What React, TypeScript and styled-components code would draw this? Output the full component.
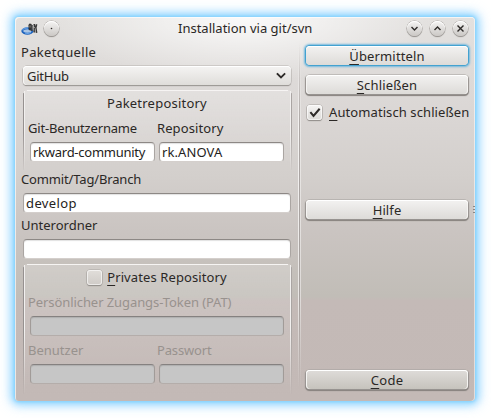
import React from 'react';
import styled, { createGlobalStyle, css } from 'styled-components';

const GlobalStyle = createGlobalStyle`
  * { box-sizing: border-box; }
  body { margin: 0; background: #fff; font: 13px/18px "Noto Sans", "Open Sans", sans-serif; color: #2b2826; }
`;

const Desktop = styled.div`
  width: 491px;
  height: 418px;
  padding: 17px 16px 17px 15px;
  overflow: hidden;
`;

const Dialog = styled.main`
  width: 460px;
  height: 384px;
  display: flex;
  flex-direction: column;
  border-radius: 4px;
  background:
    radial-gradient(ellipse 190px 64px at 50% 0, rgba(255,255,255,.85), rgba(255,255,255,0)),
    linear-gradient(#e3e1df 0, #dad6d4 100px, #d3cfcc 160px, #cac4c1 215px, #c1bdb7 279px, #c4bab7 284px, #c3b9b6 384px);
  box-shadow:
    inset 1px 1px 0 rgba(255,255,255,.65), inset -1px 0 0 rgba(255,255,255,.5),
    0 0 3px 1px #84d3fd, 0 0 9px 4px rgba(125,205,255,.8), 0 0 15px 4px rgba(160,215,255,.3);
`;

const TitleBar = styled.header`
  height: 26px;
  flex: none;
  display: flex;
  align-items: center;
  padding: 0 7px 4px 6px;
`;

const Title = styled.h1`
  flex: 1;
  margin: 0;
  padding-left: 119px;
  font: inherit;
`;

const TitleButton = styled.span<{ $gap?: number }>`
  width: 15px;
  height: 15px;
  margin-left: ${p => p.$gap ?? 8}px;
  border-radius: 50%;
  background: linear-gradient(#f5f4f3, #cbc8c5);
  box-shadow: 0 0 0 .6px #a9a5a2, 0 1px 1px 0 #85817e, inset 0 1px 0 #fff;
  svg { display: block; }
`;

const Body = styled.div`
  flex: 1;
  display: flex;
`;

const Form = styled.section`
  width: 276px;
  padding-left: 8px;
  display: flex;
  flex-direction: column;
`;

const Label = styled.label<{ $space?: number; $top?: number; $faint?: boolean }>`
  display: block;
  height: 18px;
  white-space: nowrap;
  letter-spacing: ${p => p.$space ?? 0}px;
  margin: ${p => p.$top ?? 0}px 0 0 -2px;
  ${p => p.$faint && css`color: #98928e;`}
`;

const Combo = styled.div`
  width: 268px;
  height: 19px;
  margin: 5px 0;
  padding: 0 5px 0 4px;
  display: flex;
  align-items: center;
  justify-content: space-between;
  letter-spacing: -.24px;
  border-radius: 4px;
  background: linear-gradient(#f5f4f3, #dfddda);
  box-shadow: 0 0 0 .5px #b5b1ae, 0 1px 1px #7e7a77, inset 0 1px 0 #fff, inset 1px 0 0 #f8f7f6;
`;

const Group = styled.fieldset<{ $height: number }>`
  width: 269px;
  height: ${p => p.$height}px;
  margin: 0;
  padding: 4px 7px 0 6px;
  border: 1px solid transparent;
  border-width: 0 1px;
  min-width: 0;
  border-radius: 4px 4px 0 0;
  background:
    linear-gradient(#f6f4f3, #f6f4f3) 3px 0 / calc(100% - 6px) 1px no-repeat,
    linear-gradient(#969190 50%, transparent) 0 3px / 1px 100% no-repeat border-box,
    linear-gradient(#f2f0ef 50%, transparent) 1px 1px / 1px 100% no-repeat border-box,
    linear-gradient(#f2f0ef 50%, transparent) calc(100% - 1px) 1px / 1px 100% no-repeat border-box,
    linear-gradient(#aaa5a3 50%, transparent) 100% 3px / 1px 100% no-repeat border-box,
    linear-gradient(rgba(255,255,255,.2), rgba(255,255,255,0)) padding-box;
`;

const GroupTitle = styled.div<{ $space: number }>`
  height: 18px;
  margin-bottom: 7px;
  display: flex;
  justify-content: center;
  align-items: center;
  gap: 5px;
  letter-spacing: ${p => p.$space}px;
`;

const Pair = styled.div<{ $top?: number }>`
  display: grid;
  grid-template-columns: 125px 125px;
  column-gap: 4px;
  margin-top: ${p => p.$top ?? 0}px;
`;

const Input = styled.input<{ $space?: number; $wide?: boolean }>`
  display: block;
  width: ${p => (p.$wide ? '268px' : '100%')};
  height: 20px;
  margin: 5px 0 0;
  padding: 0 2px;
  font: inherit;
  letter-spacing: ${p => p.$space ?? 0}px;
  color: #242220;
  background: #fff;
  border: 1px solid #aaa5a2;
  border-top-color: #8d8885;
  border-bottom-color: #d4cfcc;
  border-radius: 4px;
  outline: 0;
  box-shadow: inset 0 1px 1px rgba(0,0,0,.12);
  &:disabled { background: #c6c6c6; border-color: #a19b98; border-top-color: #858180; border-bottom-color: #b4adaa; }
`;

const Divider = styled.div`
  width: 3px;
  height: 345px;
  margin: 0 0 0 7px;
  background:
    linear-gradient(transparent, #f4f2f1 25%, #e9e6e4 75%, transparent) 0 0 / 1px 100% no-repeat,
    linear-gradient(transparent, #aba6a4 25%, #a5a09e 75%, transparent) 1px 0 / 1px 100% no-repeat,
    linear-gradient(transparent, #eae8e6 25%, #dedad8 75%, transparent) 2px 0 / 1px 100% no-repeat;
`;

const Actions = styled.aside`
  width: 163px;
  margin-left: 5px;
  padding-top: 3px;
  display: flex;
  flex-direction: column;
`;

const Button = styled.button<{ $top?: number; $space?: number; $focus?: boolean; $dim?: boolean }>`
  height: 19px;
  margin: ${p => p.$top ?? 0}px 1px 0 0;
  padding: 0;
  flex: none;
  font: inherit;
  line-height: 18px;
  letter-spacing: ${p => p.$space ?? 0}px;
  color: #2b2826;
  border: 0;
  border-radius: 4px;
  background: ${p => (p.$dim ? 'linear-gradient(#dfdcd9, #c6c3bd)' : 'linear-gradient(#f3f2f1, #dddbd8)')};
  box-shadow: ${p => p.$focus
    ? '0 0 0 1px #43a2d0, 0 0 2px 1.5px #72b8dd, inset 0 1px 0 #fff'
    : '0 0 0 .5px #aaa6a3, 0 1px 1px .5px #85807d, inset 0 1px 0 #fff, inset 1px 0 0 #f5f4f2, inset -1px 0 0 #f5f4f2'};
`;

const Key = styled.span`
  text-decoration: underline 1px;
  text-underline-offset: 3px;
  text-decoration-skip-ink: none;
`;

const CheckRow = styled.label`
  height: 18px;
  margin: 9px 0 0 1px;
  display: flex;
  align-items: center;
  gap: 7px;
  white-space: nowrap;
  letter-spacing: .09px;
`;

const Box = styled.span<{ $dim?: boolean }>`
  width: 15px;
  height: 15px;
  flex: none;
  border-radius: 3px;
  background: ${p => (p.$dim ? 'linear-gradient(#e1deda, #cfcbc7)' : 'linear-gradient(#f5f4f3, #dcdad7)')};
  box-shadow: 0 0 0 .6px #aaa5a2, 0 1px 1px #7c7875, inset 0 0 0 1px rgba(255,255,255,.6);
  svg { display: block; }
`;

const Grip = styled.div`
  display: grid;
  align-content: start;
  gap: 2px;
  margin: 163px 0 0 4px;
  i { width: 2px; height: 1px; background: #8b8683; }
`;

const stroke = { fill: 'none', stroke: '#2e2b29', strokeLinecap: 'square' as const };

const AppIcon = () => (
  <svg width="17" height="15" viewBox="0 0 17 15">
    <ellipse cx="6.4" cy="10" rx="5.1" ry="2.7" fill="#a9c4e4" stroke="#1d62bd" strokeWidth="2" />
    <path d="M1.2 9Q3 6.6 7 7M4 12Q7 13 10 11.6" fill="none" stroke="#80b8f2" strokeWidth=".9" />
    <path d="M7.4 4 8.6 2.6l2 .5v6.6l-2.8-.6Z" fill="#333" />
    <path d="M11 4v6M13.2 3l.4 3M15.6 3.2l-.8 3.4.8 5.2M13.2 6.5v5" fill="none" stroke="#3a3a3a" strokeWidth="1.6" />
    <path d="M9 4.4v2.2M12.1 4.5v5M14.3 7.5v3" fill="none" stroke="#a2a2a2" strokeWidth=".8" />
  </svg>
);

export default function App() {
  return (
    <>
      <GlobalStyle />
      <Desktop>
        <Dialog>
          <TitleBar>
            <AppIcon />
            <TitleButton $gap={6}>
              <svg width="15" height="15"><circle cx="7.5" cy="7.5" r=".8" fill="#2e2b29" /></svg>
            </TitleButton>
            <Title>Installation via git/svn</Title>
            <TitleButton>
              <svg width="15" height="15"><path d="M5 6.5 7.5 9 10 6.5" {...stroke} strokeWidth="1.4" /></svg>
            </TitleButton>
            <TitleButton>
              <svg width="15" height="15"><path d="M5 8.5 7.5 6 10 8.5" {...stroke} strokeWidth="1.4" /></svg>
            </TitleButton>
            <TitleButton>
              <svg width="15" height="15"><path d="m5 5 5 5m0-5-5 5" {...stroke} strokeWidth="1.4" /></svg>
            </TitleButton>
          </TitleBar>
          <Body>
            <Form>
              <Label $space={0.34}>Paketquelle</Label>
              <Combo>
                GitHub
                <svg width="10" height="8"><path d="m1.5 2 3.5 3.5L8.5 2" {...stroke} strokeWidth="1.8" /></svg>
              </Combo>
              <Group $height={80}>
                <GroupTitle $space={0.22}>Paketrepository</GroupTitle>
                <Pair>
                  <Label $space={-0.18}>Git-Benutzername</Label>
                  <Label $space={0.1}>Repository</Label>
                  <Input $space={-0.26} defaultValue="rkward-community" />
                  <Input $space={0.1} defaultValue="rk.ANOVA" />
                </Pair>
              </Group>
              <Label $space={-0.15}>Commit/Tag/Branch</Label>
              <Input $wide $space={0.4} defaultValue="develop" />
              <Label $top={3} $space={0}>Unterordner</Label>
              <Input $wide />
              <PanelGap />
              <Group $height={130}>
                <GroupTitle $space={0.11}>
                  <Box $dim />
                  <span><Key>P</Key>rivates Repository</span>
                </GroupTitle>
                <Label $faint $space={-0.08}>Persönlicher Zugangs-Token (PAT)</Label>
                <Input disabled />
                <Pair $top={5}>
                  <Label $faint $space={0}>Benutzer</Label>
                  <Label $faint $space={-0.15}>Passwort</Label>
                  <Input disabled />
                  <Input disabled />
                </Pair>
              </Group>
            </Form>
            <Divider />
            <Actions>
              <Button $focus $space={0.15}><Key>Ü</Key>bermitteln</Button>
              <Button $top={10} $space={0.15}><Key>S</Key>chließen</Button>
              <CheckRow>
                <Box>
                  <svg width="15" height="15"><path d="m4 8 2.5 3L12 4.5" {...stroke} strokeWidth="2" /></svg>
                </Box>
                <span><Key>A</Key>utomatisch schließen</span>
              </CheckRow>
              <Button $top={79} $space={0.1}><Key>H</Key>ilfe</Button>
              <Button $top={151} $space={0.3} $dim><Key>C</Key>ode</Button>
            </Actions>
            <Grip><i /><i /><i /></Grip>
          </Body>
        </Dialog>
      </Desktop>
    </>
  );
}

const PanelGap = styled.div`
  height: 5px;
`;
